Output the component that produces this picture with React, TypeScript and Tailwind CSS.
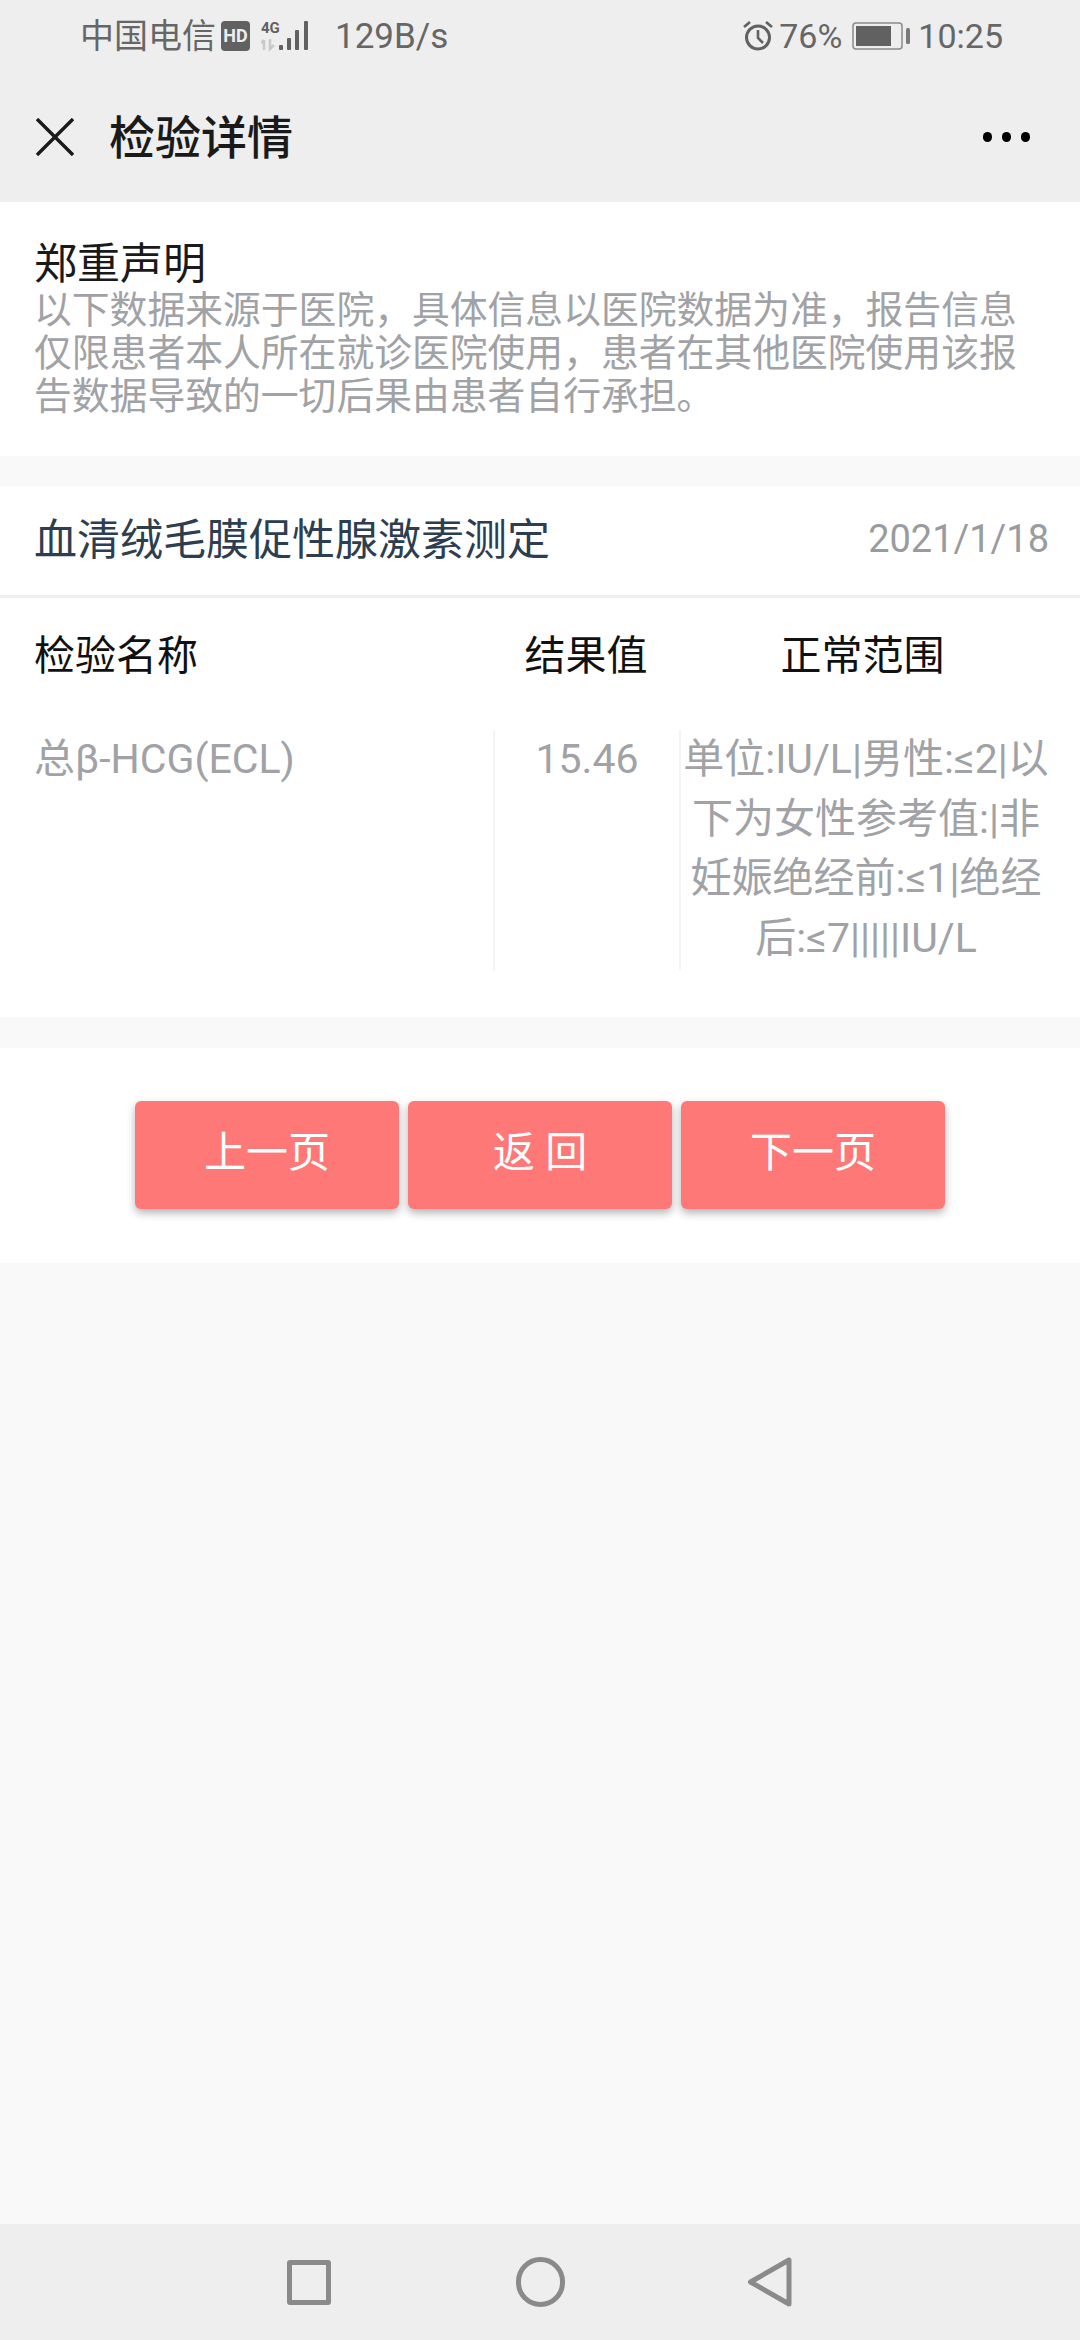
// Inspection report detail page
function StatusBar() {
  return (
    <div className="flex h-[72px] items-center justify-between pl-[80px] pr-[77px] text-[#666666]">
      <div className="flex items-center">
        <span className="text-[34px] leading-none">中国电信</span>
        <span className="ml-[5px] flex h-[30px] w-[29px] items-center justify-center rounded-[4px] bg-[#616161] text-[18px] font-bold leading-none text-[#eeeeee]">
          HD
        </span>
        <svg className="ml-[11px]" width="50" height="32" viewBox="0 0 50 32">
          <text x="0" y="13" fontSize="15" fontWeight="700" fill="#616161">4G</text>
          <path d="M3 20v10M0 23l3-3v0M9 19v10l4-4" stroke="#c9c9c9" strokeWidth="2.5" fill="none" />
          <rect x="18" y="25" width="4" height="5" rx="1" fill="#616161" />
          <rect x="26" y="18" width="4" height="12" rx="1" fill="#616161" />
          <rect x="34" y="10" width="4" height="20" rx="1" fill="#616161" />
          <rect x="43" y="1" width="4" height="29" rx="1" fill="#616161" />
        </svg>
        <span className="ml-[24px] text-[35px] leading-none">129B/s</span>
      </div>
      <div className="flex items-center">
        <svg width="30" height="30" viewBox="0 0 30 30" fill="none" stroke="#616161">
          <circle cx="15" cy="16.5" r="11.5" strokeWidth="3" />
          <path d="M15 9v8l5 5" strokeWidth="2.6" />
          <path d="M1 6l6-5M29 6l-6-5" strokeWidth="2.6" />
        </svg>
        <span className="ml-[6px] text-[34px] leading-none">76%</span>
        <svg className="ml-[10px]" width="58" height="28" viewBox="0 0 58 28" fill="none">
          <rect x="1" y="1" width="49" height="26" rx="3" stroke="#8a8a8a" strokeWidth="1.5" />
          <rect x="4" y="4" width="35" height="20" fill="#616161" />
          <rect x="54" y="6" width="4" height="16" rx="1.5" fill="#7a7a7a" />
        </svg>
        <span className="ml-[8px] text-[34px] leading-none">10:25</span>
      </div>
    </div>
  );
}

function NavBar() {
  return (
    <div className="flex h-[130px] items-center justify-between pl-[36px] pr-[50px]">
      <div className="flex items-center">
        <svg width="38" height="38" viewBox="0 0 38 38" stroke="#1a1a1a" strokeWidth="3.4" fill="none">
          <path d="M1 1l36 36M37 1L1 37" />
        </svg>
        <h1 className="ml-[35px] mt-[2px] text-[46px] font-medium leading-none text-[#1a1a1a]">检验详情</h1>
      </div>
      <div className="flex items-center gap-[9.5px]">
        <span className="h-[9.5px] w-[9.5px] rounded-full bg-black" />
        <span className="h-[9.5px] w-[9.5px] rounded-full bg-black" />
        <span className="h-[9.5px] w-[9.5px] rounded-full bg-black" />
      </div>
    </div>
  );
}

function BottomNav() {
  return (
    <div className="flex h-[116px] items-center bg-[#eeeeee] pl-[287px]">
      <span className="h-[45px] w-[44px] rounded-[3px] border-[5px] border-[#8a8a8a]" />
      <span className="ml-[185px] h-[50px] w-[49px] rounded-full border-[5px] border-[#8a8a8a]" />
      <svg className="ml-[183px]" width="44" height="50" viewBox="0 0 44 50" fill="none">
        <path
          d="M41 3v44L2.5 25z"
          stroke="#8a8a8a"
          strokeWidth="5"
          strokeLinejoin="round"
        />
      </svg>
    </div>
  );
}

function PageButton({ label }: { label: string }) {
  return (
    <button className="flex h-[108px] w-[264px] items-center justify-center rounded-[6px] bg-[#ff7878] pb-[4px] text-[42px] leading-none text-white whitespace-pre shadow-[0_4px_8px_rgba(0,0,0,0.3)]">
      {label}
    </button>
  );
}

export default function App() {
  return (
    <div className="flex h-[2340px] w-[1080px] flex-col overflow-hidden bg-[#f9f9f9] font-['Roboto','Noto_Sans_CJK_SC',sans-serif]">
      <header className="bg-[#eeeeee]">
        <StatusBar />
        <NavBar />
      </header>

      {/* Disclaimer */}
      <section className="h-[254px] bg-white pl-[34px] pr-[30px] pt-[37px]">
        <h2 className="text-[43px] leading-[50px] text-[#1a1a1a]">郑重声明</h2>
        <p className="text-[37.8px] leading-[43px] text-[#a0a2a6]">
          以下数据来源于医院，具体信息以医院数据为准，报告信息仅限患者本人所在就诊医院使用，患者在其他医院使用该报告数据导致的一切后果由患者自行承担。
        </p>
      </section>

      {/* Result card */}
      <section className="mt-[30px] h-[531px] bg-white">
        <div className="flex h-[112px] items-center justify-between border-b-[3px] border-[#eeeeee] pl-[34px] pr-[31px]">
          <span className="text-[43px] leading-none text-[#2c3e50]">血清绒毛膜促性腺激素测定</span>
          <span className="pb-[3px] text-[38px] leading-none text-[#999ba0]">2021/1/18</span>
        </div>
        <div className="flex h-[116px] items-center pt-[1px] text-[41px] leading-none text-[#111111]">
          <span className="w-[493px] pl-[34px]">检验名称</span>
          <span className="w-[186px] text-center">结果值</span>
          <span className="w-[367px] text-center">正常范围</span>
        </div>
        <div className="mt-[16px] flex h-[241px] text-[41px] leading-[59.5px] text-[#a0a2a6]">
          <div className="w-[493px] pl-[34px]">总β-HCG(ECL)</div>
          <div className="w-[186px] border-l-2 border-[#f4f4f4] text-center">15.46</div>
          <div className="w-[372px] border-l-2 border-[#f4f4f4] text-center">
            单位:IU/L|男性:≤2|以下为女性参考值:|非妊娠绝经前:≤1|绝经后:≤7|||||IU/L
          </div>
        </div>
      </section>

      {/* Paging buttons */}
      <section className="mt-[31px] flex h-[215px] items-center justify-center gap-[9px] bg-white pb-[1px]">
        <PageButton label="上一页" />
        <PageButton label="返 回" />
        <PageButton label="下一页" />
      </section>

      <div className="flex-1 bg-[#f9f9f9]" />
      <BottomNav />
    </div>
  );
}
